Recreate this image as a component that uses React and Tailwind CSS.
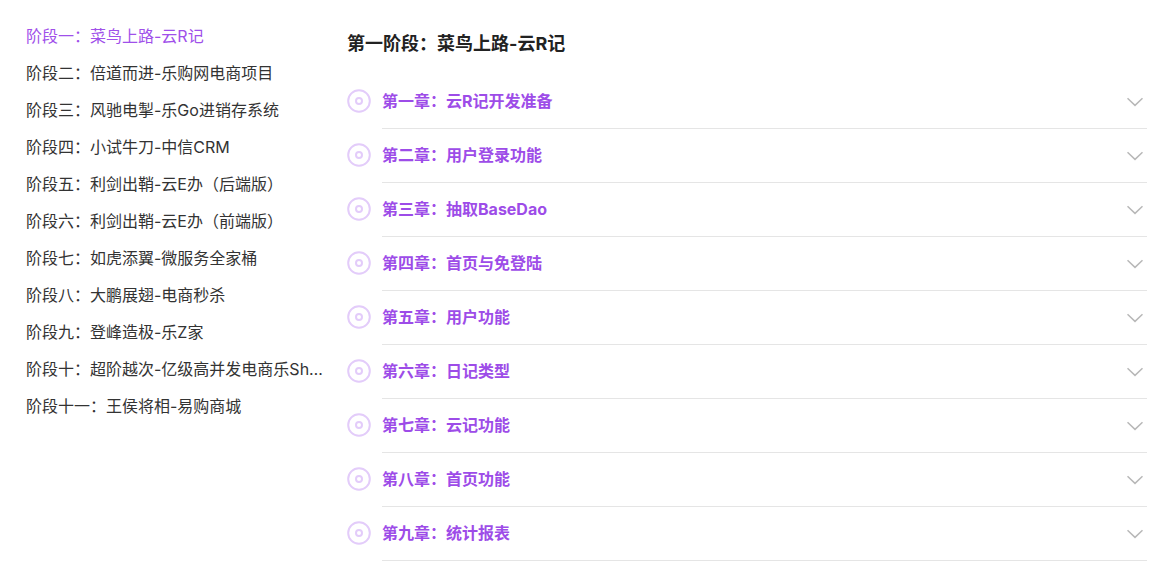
const C = "\uFF1A";
const L = "\uFF08";
const R = "\uFF09";
const stages = [`阶段一${C}菜鸟上路-云R记`,`阶段二${C}倍道而进-乐购网电商项目`,`阶段三${C}风驰电掣-乐Go进销存系统`,`阶段四${C}小试牛刀-中信CRM`,`阶段五${C}利剑出鞘-云E办${L}后端版${R}`,`阶段六${C}利剑出鞘-云E办${L}前端版${R}`,`阶段七${C}如虎添翼-微服务全家桶`,`阶段八${C}大鹏展翅-电商秒杀`,`阶段九${C}登峰造极-乐Z家`,`阶段十${C}超阶越次-亿级高并发电商乐Shop商城系统`,`阶段十一${C}王侯将相-易购商城`];
const chapters = [`第一章${C}云R记开发准备`,`第二章${C}用户登录功能`,`第三章${C}抽取BaseDao`,`第四章${C}首页与免登陆`,`第五章${C}用户功能`,`第六章${C}日记类型`,`第七章${C}云记功能`,`第八章${C}首页功能`,`第九章${C}统计报表`];

function Disc() {
  return (
    <svg width="24" height="24" viewBox="0 0 24 24" fill="none" stroke="#e3ccfa" className="shrink-0 self-center -mt-[2px]">
      <circle cx="12" cy="12" r="10.8" strokeWidth="2" />
      <circle cx="12" cy="12" r="3" strokeWidth="2" />
    </svg>
  );
}
function Chevron() {
  return (
    <svg width="16" height="10" viewBox="0 0 16 10" fill="none" stroke="#b8b8b8" strokeWidth="1.5" className="shrink-0 mt-[2px]">
      <path d="M0.5 1.2 8 8.4 15.5 1.2" />
    </svg>
  );
}
export default function App() {
  return (
    <div className="flex w-[1168px] h-[573px] overflow-hidden bg-white pl-[26px] pr-[21px] pt-[18px] text-[16px]" style={{ fontFamily: 'Inter, "Noto Sans CJK SC", sans-serif' }}>
      <ul className="w-[297px] shrink-0 flex flex-col">
        {stages.map((s, i) => (
          <li key={s} className={`h-[37px] leading-[37px] truncate ${i === 0 ? "text-[#a050ea]" : "text-[#333333]"}`}>{s}</li>
        ))}
      </ul>
      <div className="ml-[24px] flex-1 min-w-0">
        <h2 className="h-[57px] pb-[5px] leading-[52px] text-[18px] font-bold text-[#222222]">第一阶段{C}菜鸟上路-云R记</h2>
        <ul>
          {chapters.map((c) => (
            <li key={c} className="flex h-[54px] gap-[11px]">
              <Disc />
              <div className="flex-1 h-full flex items-center justify-between border-b border-[#e5e5e5] pb-[2px] pr-[4px]">
                <span className="font-bold text-[#9d4ce8]">{c}</span>
                <Chevron />
              </div>
            </li>
          ))}
        </ul>
      </div>
    </div>
  );
}
